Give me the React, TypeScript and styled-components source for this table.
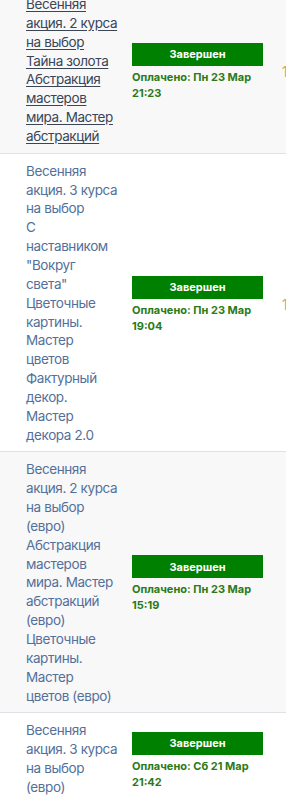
import React from "react";
import styled, { createGlobalStyle } from "styled-components";

const GlobalStyle = createGlobalStyle`
  html, body {
    margin: 0;
    padding: 0;
    background: #fff;
    overflow: hidden;
  }
  body {
    font-family: Inter, "Noto Sans", "Liberation Sans", sans-serif;
  }
`;

const Table = styled.div`
  width: 286px;
  overflow: hidden;
  margin-top: -13px;
`;

const Row = styled.div<{ $striped: boolean }>`
  display: grid;
  grid-template-columns: 132px 131px 1fr;
  align-items: center;
  border-bottom: 1px solid #dfe2e6;
  background: ${(p) => (p.$striped ? "#f8f8f9" : "#fff")};
  white-space: nowrap;
`;

const NameCell = styled.div`
  padding: 8px 8px 7px 26px;
  font-size: 13.5px;
  line-height: 18.85px;
`;

const CourseLink = styled.a<{ $active: boolean }>`
  letter-spacing: -0.4px;
  color: ${(p) => (p.$active ? "#3a4556" : "#54709a")};
  text-decoration: ${(p) => (p.$active ? "underline" : "none")};
  text-underline-offset: 2px;
  cursor: pointer;
`;

const StatusCell = styled.div`
  display: flex;
  flex-direction: column;
  padding-top: 4px;
`;

const Badge = styled.div`
  height: 23px;
  background: #008000;
  color: #fff;
  font-size: 11px;
  font-weight: 700;
  display: flex;
  align-items: center;
  justify-content: center;
`;

const Paid = styled.div`
  margin-top: 3px;
  font-size: 11px;
  font-weight: 700;
  line-height: 16px;
  color: #2a7a18;
`;

const Extra = styled.div`
  padding-left: 19px;
  padding-top: 4px;
  font-size: 14px;
  color: #e8a23a;
`;

const orders = [
  {
    lines: [
      "Весенняя",
      "акция. 2 курса",
      "на выбор",
      "Тайна золота",
      "Абстракция",
      "мастеров",
      "мира. Мастер",
      "абстракций",
    ],
    paid: "Пн 23 Мар",
    time: "21:23",
    extra: "1",
    active: true,
  },
  {
    lines: [
      "Весенняя",
      "акция. 3 курса",
      "на выбор",
      "С",
      "наставником",
      "\"Вокруг",
      "света\"",
      "Цветочные",
      "картины.",
      "Мастер",
      "цветов",
      "Фактурный",
      "декор.",
      "Мастер",
      "декора 2.0",
    ],
    paid: "Пн 23 Мар",
    time: "19:04",
    extra: "1",
    active: false,
  },
  {
    lines: [
      "Весенняя",
      "акция. 2 курса",
      "на выбор",
      "(евро)",
      "Абстракция",
      "мастеров",
      "мира. Мастер",
      "абстракций",
      "(евро)",
      "Цветочные",
      "картины.",
      "Мастер",
      "цветов (евро)",
    ],
    paid: "Пн 23 Мар",
    time: "15:19",
    extra: "",
    active: false,
  },
  {
    lines: ["Весенняя", "акция. 3 курса", "на выбор", "(евро)"],
    paid: "Сб 21 Мар",
    time: "21:42",
    extra: "",
    active: false,
  },
];

const App = () => {
  return (
    <>
      <GlobalStyle />
      <Table>
        {orders.map((o, i) => (
          <Row key={i} $striped={i % 2 === 0}>
            <NameCell>
              <CourseLink $active={o.active}>
                {o.lines.map((l, j) => (
                  <React.Fragment key={j}>
                    {l}
                    {j < o.lines.length - 1 && <br />}
                  </React.Fragment>
                ))}
              </CourseLink>
            </NameCell>
            <StatusCell>
              <Badge>Завершен</Badge>
              <Paid>
                Оплачено: {o.paid}
                <br />
                {o.time}
              </Paid>
            </StatusCell>
            <Extra>{o.extra}</Extra>
          </Row>
        ))}
      </Table>
    </>
  );
};

export default App;
